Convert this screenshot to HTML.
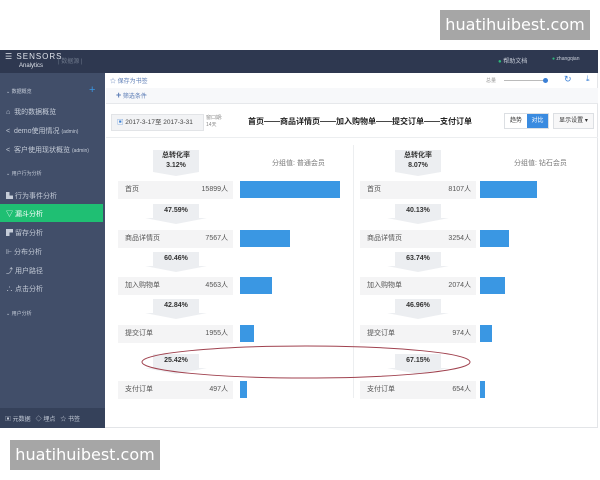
<!DOCTYPE html>
<html><head><meta charset="utf-8"><style>
*{margin:0;padding:0;box-sizing:border-box}
body{width:600px;height:480px;background:#fff;position:relative;overflow:hidden;font-family:"Liberation Sans","Noto Sans CJK SC",sans-serif;color:#333}
.a{position:absolute}
.wm{background:#a6a6a6;color:#fff;font-size:16px;line-height:30px;text-align:center;font-family:"DejaVu Sans",sans-serif}
.side{left:0;top:73px;width:105px;height:355px;background:#414e69}
.si{position:absolute;left:6px;font-size:7px;color:#c5ccd8;white-space:nowrap}
.row{position:absolute;height:18px;background:#f4f4f5;font-size:7px;color:#555;line-height:18px}
.row .n{position:absolute;left:7px}
.row .v{position:absolute;right:5px}
.bar{position:absolute;height:17px;background:#3a97e3}
.pct{position:absolute;width:46px;height:14px;background:#eceef1;font-size:7px;font-weight:bold;text-align:center;line-height:14px;color:#333}
.pct:after{content:"";position:absolute;left:-8px;top:14px;border-left:31px solid transparent;border-right:31px solid transparent;border-top:6px solid #eceef1}
.tot{position:absolute;width:46px;height:22px;background:#eceef1;font-size:7px;font-weight:bold;text-align:center;line-height:10px;padding-top:1px}
.tot:after{content:"";position:absolute;left:0;top:22px;border-left:23px solid transparent;border-right:23px solid transparent;border-top:4px solid #eceef1}
.g{font-size:7px;color:#777}
</style></head><body>
<div class="a wm" style="left:440px;top:10px;width:150px;height:30px">huatihuibest.com</div>
<div class="a wm" style="left:10px;top:440px;width:150px;height:30px">huatihuibest.com</div>
<div class="a" style="left:0;top:50px;width:598px;height:23px;background:#2e3850"></div>
<div class="a" style="left:5px;top:53px;color:#dfe3ea;font-size:8px;letter-spacing:1px;line-height:8px">☰ SENSORS<br><span style="font-size:6px;letter-spacing:0;padding-left:14px">Analytics</span></div>
<div class="a" style="left:58px;top:56px;color:#6d778a;font-size:6px">| 数据源 |</div>
<div class="a" style="left:498px;top:56px;color:#c9cfd9;font-size:6px"><span style="color:#2cb87a">●</span> 帮助文档</div>
<div class="a" style="left:552px;top:56px;color:#c9cfd9;font-size:5px"><span style="color:#2cb87a">●</span> zhangqian</div>
<div class="a side"></div>
<div class="si" style="top:88px;font-size:5px">⌄ 数据概览</div>
<div class="a" style="left:89px;top:84px;color:#3a97e3;font-size:11px">+</div>
<div class="si" style="top:107px">⌂ &nbsp;我的数据概览</div>
<div class="si" style="top:126px">&lt; &nbsp;demo使用情况 <span style="font-size:5px">(admin)</span></div>
<div class="si" style="top:145px">&lt; &nbsp;客户使用现状概览 <span style="font-size:5px">(admin)</span></div>
<div class="si" style="top:170px;font-size:5px">⌄ 用户行为分析</div>
<div class="si" style="top:191px">▙ 行为事件分析</div>
<div class="a" style="left:0;top:204px;width:103px;height:18px;background:#1fbf73"></div>
<div class="si" style="top:209px;color:#fff">▽ 漏斗分析</div>
<div class="si" style="top:228px">▛ 留存分析</div>
<div class="si" style="top:247px">⊩ 分布分析</div>
<div class="si" style="top:266px">⤴ 用户路径</div>
<div class="si" style="top:284px">∴ 点击分析</div>
<div class="si" style="top:310px;font-size:5px">⌄ 用户分析</div>
<div class="a" style="left:0;top:408px;width:105px;height:20px;background:#35415a"></div>
<div class="si" style="top:414px;left:5px;font-size:6px">▣ 元数据 &nbsp; ◇ 埋点 &nbsp; ☆ 书签</div>
<div class="a" style="left:105px;top:73px;width:493px;height:355px;border-right:1px solid #e3e5e8;border-bottom:1px solid #e3e5e8"></div>
<div class="a" style="left:106px;top:88px;width:492px;height:16px;background:#f7f8fa;border-bottom:1px solid #e6e8eb"></div>
<div class="a" style="left:110px;top:76px;font-size:6px;color:#5a7bb5">☆ 保存为书签</div>
<div class="a" style="left:116px;top:90px;font-size:6px;color:#5a7bb5"><b style="font-size:9px">+</b> 筛选条件</div>
<div class="a" style="left:486px;top:77px;font-size:5px;color:#999">总量</div>
<div class="a" style="left:504px;top:80px;width:44px;height:1px;background:#bbb"></div>
<div class="a" style="left:543px;top:78px;width:5px;height:5px;border-radius:50%;background:#3a7fd5"></div>
<div class="a" style="left:564px;top:74px;font-size:9px;color:#3a7fd5">↻</div>
<div class="a" style="left:586px;top:74px;font-size:8px;color:#3a7fd5">⤓</div>
<div class="a" style="left:106px;top:137px;width:492px;height:1px;background:#eceef0"></div>
<div class="a" style="left:111px;top:114px;width:93px;height:17px;background:#f2f3f5;border:1px solid #e2e4e7;font-size:6.5px;line-height:15px;padding-left:5px;color:#444"><span style="color:#3a7fd5">▣</span> 2017-3-17至 2017-3-31</div>
<div class="a" style="left:206px;top:115px;font-size:5px;color:#888;line-height:7px">窗口期:<br>14天</div>
<div class="a" style="left:248px;top:116px;font-size:8px;font-weight:bold;color:#222;white-space:nowrap">首页——商品详情页——加入购物单——提交订单——支付订单</div>
<div class="a" style="left:504px;top:113px;width:45px;height:16px;border:1px solid #dcdfe3;font-size:6px;line-height:14px;background:#fff"><span style="display:inline-block;width:22px;text-align:center">趋势</span><span style="display:inline-block;width:21px;text-align:center;background:#3a8be0;color:#fff">对比</span></div>
<div class="a" style="left:553px;top:113px;width:41px;height:16px;border:1px solid #dcdfe3;font-size:6px;line-height:14px;text-align:center;background:#f7f7f8">显示设置 ▾</div>
<div class="a" style="left:353px;top:145px;width:1px;height:253px;background:#eceef0"></div>
<div class="tot" style="left:153px;top:150px">总转化率<br>3.12%</div>
<div class="a g" style="left:272px;top:158px">分组值: 普通会员</div>
<div class="row" style="left:118px;top:181px;width:115px"><span class="n">首页</span><span class="v">15899人</span></div><div class="bar" style="left:240px;top:181px;width:100px"></div>
<div class="pct" style="left:153px;top:204px">47.59%</div>
<div class="row" style="left:118px;top:230px;width:115px"><span class="n">商品详情页</span><span class="v">7567人</span></div><div class="bar" style="left:240px;top:230px;width:50px"></div>
<div class="pct" style="left:153px;top:252px">60.46%</div>
<div class="row" style="left:118px;top:277px;width:115px"><span class="n">加入购物单</span><span class="v">4563人</span></div><div class="bar" style="left:240px;top:277px;width:32px"></div>
<div class="pct" style="left:153px;top:299px">42.84%</div>
<div class="row" style="left:118px;top:325px;width:115px"><span class="n">提交订单</span><span class="v">1955人</span></div><div class="bar" style="left:240px;top:325px;width:14px"></div>
<div class="pct" style="left:153px;top:354px">25.42%</div>
<div class="row" style="left:118px;top:381px;width:115px"><span class="n">支付订单</span><span class="v">497人</span></div><div class="bar" style="left:240px;top:381px;width:7px"></div>
<div class="tot" style="left:395px;top:150px">总转化率<br>8.07%</div>
<div class="a g" style="left:514px;top:158px">分组值: 钻石会员</div>
<div class="row" style="left:360px;top:181px;width:116px"><span class="n">首页</span><span class="v">8107人</span></div><div class="bar" style="left:480px;top:181px;width:57px"></div>
<div class="pct" style="left:395px;top:204px">40.13%</div>
<div class="row" style="left:360px;top:230px;width:116px"><span class="n">商品详情页</span><span class="v">3254人</span></div><div class="bar" style="left:480px;top:230px;width:29px"></div>
<div class="pct" style="left:395px;top:252px">63.74%</div>
<div class="row" style="left:360px;top:277px;width:116px"><span class="n">加入购物单</span><span class="v">2074人</span></div><div class="bar" style="left:480px;top:277px;width:25px"></div>
<div class="pct" style="left:395px;top:299px">46.96%</div>
<div class="row" style="left:360px;top:325px;width:116px"><span class="n">提交订单</span><span class="v">974人</span></div><div class="bar" style="left:480px;top:325px;width:12px"></div>
<div class="pct" style="left:395px;top:354px">67.15%</div>
<div class="row" style="left:360px;top:381px;width:116px"><span class="n">支付订单</span><span class="v">654人</span></div><div class="bar" style="left:480px;top:381px;width:5px"></div>
<svg class="a" style="left:0;top:0" width="600" height="480"><ellipse cx="306" cy="362" rx="164" ry="16" fill="none" stroke="#a0424f" stroke-width="1"/></svg>
</body></html>
